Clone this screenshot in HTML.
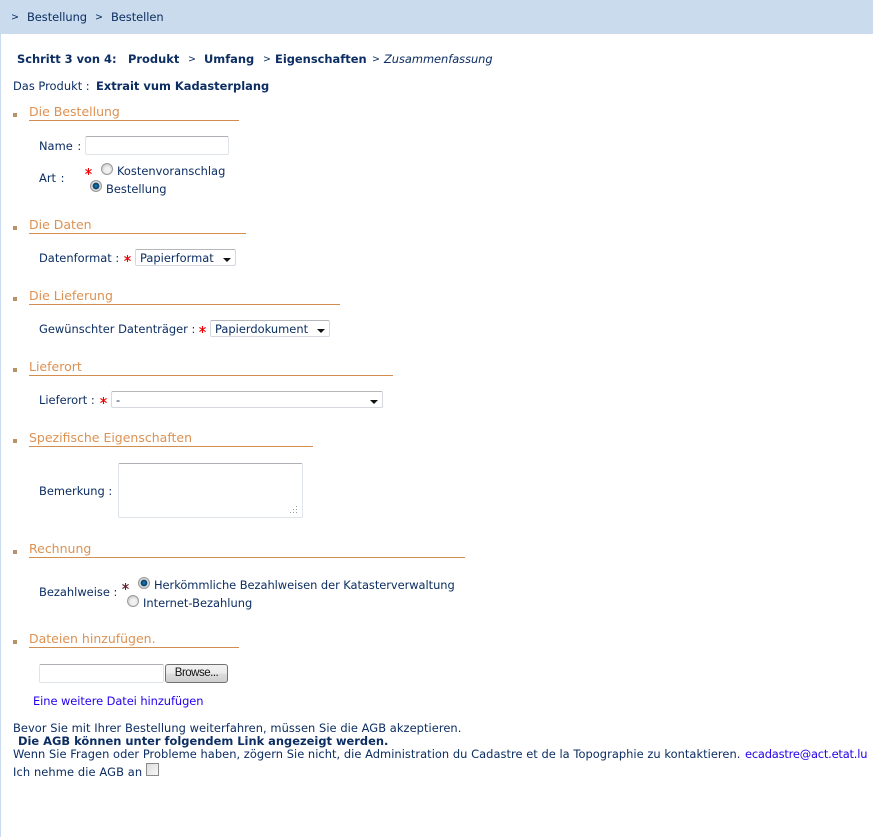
<!DOCTYPE html>
<html lang="de"><head><meta charset="utf-8"><title>Bestellen</title>
<style>
html,body{margin:0;padding:0;background:#fff}
body{width:873px;height:837px;position:relative;overflow:hidden;font:11.44px/14px "DejaVu Sans",Verdana,sans-serif;color:#0c2e62}
.t{position:absolute;white-space:nowrap;margin-top:1px}
.g{font-size:9.5px;margin-top:2px}
.b{font-weight:bold}
.h{position:absolute;left:29px;height:17px;border-bottom:1px solid #d18e4e;color:#dc9152;font-size:12.5px;line-height:17px;white-space:nowrap}
.sq{position:absolute;left:13px;width:4px;height:4px;background:#b8926a}
.ast{position:absolute;width:7px;height:7px}
.ast path{stroke:#f00000;stroke-width:1.1;fill:none}
.box{position:absolute;box-sizing:border-box;background:#fff;border:1px solid #dfe3ea;border-top-color:#aeb0b5;border-radius:2px}
.sel{position:absolute;box-sizing:border-box;background:#fff;border:1px solid #d5d8de;border-top-color:#b5b7bb;border-radius:2px;height:17px;line-height:17px;padding-left:4px}
.sel:after{content:"";position:absolute;right:4px;top:8px;border-left:4px solid transparent;border-right:4px solid transparent;border-top:4px solid #111}
.rad{position:absolute;width:12px;height:12px;box-sizing:border-box;border-radius:50%;border:1px solid #9a9a9a;background:radial-gradient(circle at 55% 60%,#f4f4f4 0,#ececec 40%,#c4c4c4 80%,#b0b0b0 100%)}
.rad.on{background:radial-gradient(circle,#1a86bd 0,#0a5c92 22%,#0b3b60 42%,#dedede 52%,#c2c2c2 100%)}
a{color:#2200ee;text-decoration:none}
</style></head><body>
<div style="position:absolute;left:0;top:34px;width:1px;height:803px;background:#c9dbec"></div>
<div style="position:absolute;left:0;top:0;width:873px;height:34px;background:#c9dbec"></div>
<div class="t g" style="left:11px;top:9px">&gt;</div>
<div class="t" style="left:27px;top:9px;letter-spacing:-.05px">Bestellung</div>
<div class="t g" style="left:95px;top:9px">&gt;</div>
<div class="t" style="left:111px;top:9px;letter-spacing:-.05px">Bestellen</div>

<div class="t b" style="left:17px;top:51px">Schritt 3 von 4:</div>
<div class="t b" style="left:128px;top:51px">Produkt</div>
<div class="t g" style="left:188px;top:51px">&gt;</div>
<div class="t b" style="left:204px;top:51px">Umfang</div>
<div class="t g" style="left:263px;top:51px">&gt;</div>
<div class="t b" style="left:275px;top:51px">Eigenschaften</div>
<div class="t g" style="left:372px;top:51px">&gt;</div>
<div class="t" style="left:384px;top:51px;font-style:italic;letter-spacing:-.05px">Zusammenfassung</div>

<div class="t" style="left:13px;top:78px">Das Produkt :</div>
<div class="t b" style="left:96px;top:78px">Extrait vum Kadasterplang</div>

<div class="sq" style="top:113px"></div>
<div class="h" style="top:103px;width:210px">Die Bestellung</div>
<div class="t" style="left:39px;top:138px;word-spacing:1px">Name :</div>
<div class="box" style="left:85px;top:136px;width:144px;height:19px"></div>
<div class="t" style="left:39px;top:170px;word-spacing:1px">Art :</div>
<svg class="ast" style="left:85px;top:168px" viewBox="0 0 7 7"><path d="M3.5 0V7M.4 1.4L6.6 5.6M6.6 1.4L.4 5.6"/></svg>
<div class="rad" style="left:101px;top:163px"></div>
<div class="t" style="left:117px;top:163px">Kostenvoranschlag</div>
<div class="rad on" style="left:90px;top:180px"></div>
<div class="t" style="left:106px;top:181px">Bestellung</div>

<div class="sq" style="top:226px"></div>
<div class="h" style="top:216px;width:217px">Die Daten</div>
<div class="t" style="left:39px;top:250px">Datenformat :</div>
<svg class="ast" style="left:124px;top:255px" viewBox="0 0 7 7"><path d="M3.5 0V7M.4 1.4L6.6 5.6M6.6 1.4L.4 5.6"/></svg>
<div class="sel" style="left:135px;top:249px;width:101px">Papierformat</div>

<div class="sq" style="top:297px"></div>
<div class="h" style="top:287px;width:311px">Die Lieferung</div>
<div class="t" style="left:39px;top:321px">Gewünschter Datenträger :</div>
<svg class="ast" style="left:199px;top:326px" viewBox="0 0 7 7"><path d="M3.5 0V7M.4 1.4L6.6 5.6M6.6 1.4L.4 5.6"/></svg>
<div class="sel" style="left:210px;top:320px;width:120px">Papierdokument</div>

<div class="sq" style="top:368px"></div>
<div class="h" style="top:358px;width:364px">Lieferort</div>
<div class="t" style="left:39px;top:392px">Lieferort :</div>
<svg class="ast" style="left:100px;top:397px" viewBox="0 0 7 7"><path d="M3.5 0V7M.4 1.4L6.6 5.6M6.6 1.4L.4 5.6"/></svg>
<div class="sel" style="left:111px;top:391px;width:272px">-</div>

<div class="sq" style="top:439px"></div>
<div class="h" style="top:429px;width:284px">Spezifische Eigenschaften</div>
<div class="t" style="left:39px;top:483px">Bemerkung :</div>
<div class="box" style="left:118px;top:463px;width:185px;height:55px"></div>
<svg style="position:absolute;left:289px;top:505px" width="10" height="10"><g fill="#9a9a9a"><rect x="7" y="1" width="1" height="1"/><rect x="4" y="4" width="1" height="1"/><rect x="7" y="4" width="1" height="1"/><rect x="1" y="7" width="1" height="1"/><rect x="4" y="7" width="1" height="1"/><rect x="7" y="7" width="1" height="1"/></g></svg>

<div class="sq" style="top:550px"></div>
<div class="h" style="top:540px;width:436px">Rechnung</div>
<div class="t" style="left:39px;top:584px">Bezahlweise :</div>
<svg class="ast" style="left:122px;top:583px" viewBox="0 0 7 7"><path style="stroke:#602030" d="M3.5 0V7M.4 1.4L6.6 5.6M6.6 1.4L.4 5.6"/></svg>
<div class="rad on" style="left:138px;top:577px"></div>
<div class="t" style="left:154px;top:577px;letter-spacing:-.05px">Herkömmliche Bezahlweisen der Katasterverwaltung</div>
<div class="rad" style="left:127px;top:595px"></div>
<div class="t" style="left:143px;top:595px">Internet-Bezahlung</div>

<div class="sq" style="top:640px"></div>
<div class="h" style="top:630px;width:210px">Dateien hinzufügen.</div>
<div class="box" style="left:39px;top:664px;width:125px;height:19px"></div>
<div style="position:absolute;left:165px;top:664px;width:63px;height:19px;box-sizing:border-box;border:1px solid #707070;border-radius:3px;background:linear-gradient(#f2f2f2 0,#ebebeb 48%,#dcdcdc 52%,#cfcfcf 100%);color:#111;font:11.5px/17px 'Liberation Sans',sans-serif;letter-spacing:-.5px;text-align:center">Browse...</div>
<div class="t" style="left:33px;top:693px;letter-spacing:-.07px"><a>Eine weitere Datei hinzufügen</a></div>

<div class="t" style="left:13px;top:720px;letter-spacing:.05px">Bevor Sie mit Ihrer Bestellung weiterfahren, müssen Sie die AGB akzeptieren.</div>
<div class="t b" style="left:18px;top:733px">Die AGB können unter folgendem Link angezeigt werden.</div>
<div class="t" style="left:13px;top:746px;letter-spacing:.03px">Wenn Sie Fragen oder Probleme haben, zögern Sie nicht, die Administration du Cadastre et de la Topographie zu kontaktieren.</div>
<div class="t" style="left:745px;top:746px;letter-spacing:-.2px"><a>ecadastre@act.etat.lu</a></div>
<div class="t" style="left:13px;top:764px;letter-spacing:.1px">Ich nehme die AGB an</div>
<div style="position:absolute;left:146px;top:763px;width:13px;height:13px;box-sizing:border-box;border:1px solid #8a8a8a;background:linear-gradient(135deg,#ddd,#f8f8f8)"></div>
</body></html>
